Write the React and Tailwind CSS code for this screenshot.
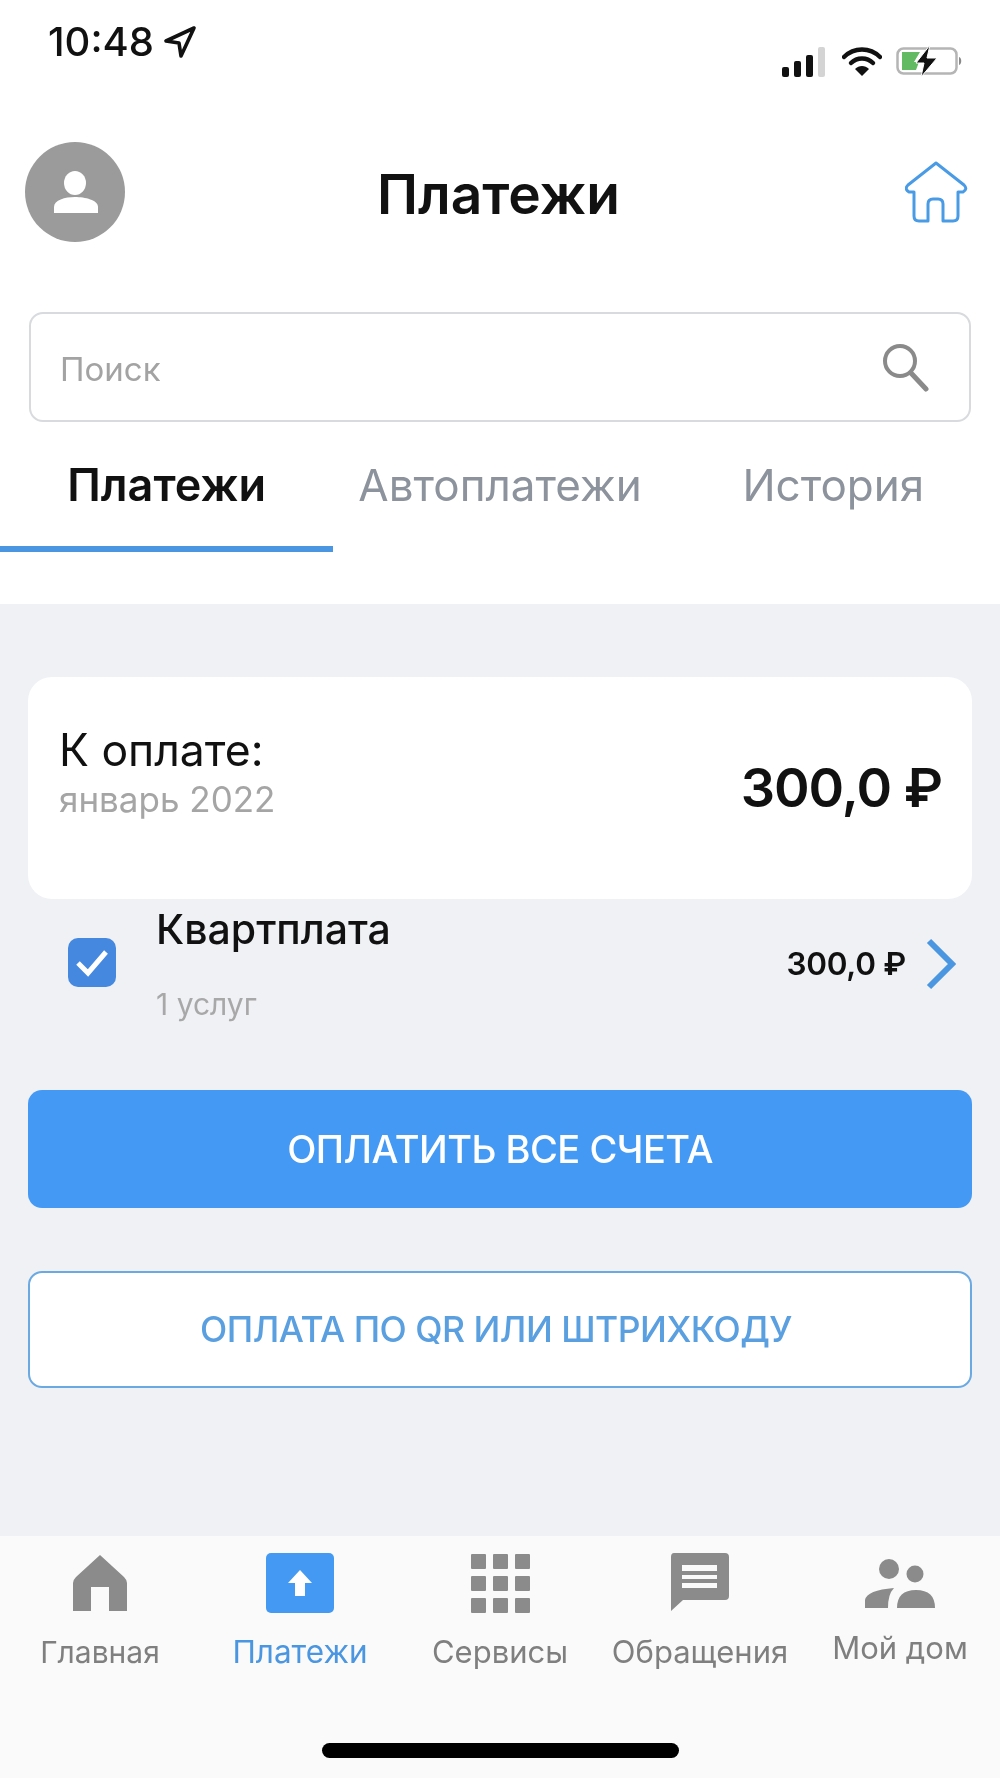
import React from 'react';

const navItems = [
  { label: 'Главная', icon: <HomeSolid />, size: 'text-[30px]' },
  { label: 'Платежи', icon: <PayIcon />, active: true, size: 'text-[31.5px]' },
  { label: 'Сервисы', icon: <GridIcon />, size: 'text-[31px]' },
  { label: 'Обращения', icon: <ChatIcon />, size: 'text-[31px]' },
  { label: 'Мой дом', icon: <PeopleIcon />, raised: true, size: 'text-[31px]' },
];

function LocationArrow() {
  return (
    <svg width="34" height="34" viewBox="0 0 34 34" fill="none">
      <path d="M31 3 L3 16 L16 18 L18 31 Z" stroke="#111" strokeWidth="3.6" strokeLinejoin="round" />
    </svg>
  );
}

function StatusIcons() {
  return (
    <div className="flex items-end gap-[14px]">
      <svg width="46" height="30" viewBox="0 0 46 30">
        <rect x="0" y="20" width="7" height="10" rx="2" fill="#111" />
        <rect x="12" y="14" width="7" height="16" rx="2" fill="#111" />
        <rect x="24" y="8" width="7" height="22" rx="2" fill="#111" />
        <rect x="36" y="0" width="7" height="30" rx="2" fill="#d4d4d4" />
      </svg>
      <svg width="40" height="30" viewBox="0 0 40 30" fill="none">
        <path d="M2 10 C12 0 28 0 38 10" stroke="#111" strokeWidth="4.5" strokeLinecap="round" />
        <path d="M9 16 C15 10 25 10 31 16" stroke="#111" strokeWidth="4.5" strokeLinecap="round" />
        <path d="M20 29 L13 22 C17 18 23 18 27 22 Z" fill="#111" />
      </svg>
      <svg width="68" height="32" viewBox="0 0 68 32" fill="none">
        <rect x="1.500" y="3.500" width="59" height="25" rx="6" stroke="#b5b5b5" strokeWidth="2.500" />
        <path d="M6 7 H24 L18 17 H23 L20 25 H6 Z" fill="#62bb62" />
        <path d="M63 12 C66 13 66 19 63 20 Z" fill="#8a8a8a" />
        <path d="M34 0 L20 18 H28 L25 32 L41 13 H31 Z" fill="#111" stroke="#fff" strokeWidth="1" />
      </svg>
    </div>
  );
}

function HomeOutline() {
  return (
    <svg width="63" height="63" viewBox="0 0 63 63" fill="none">
      <path
        d="M31 2 L3 24 Q-1 28 4 31 L9 31 V55 Q9 60 14 60 H23 V43 Q23 38 28 38 H33 Q38 38 38 43 V60 H48 Q53 60 53 55 V31 L58 31 Q63 28 59 24 Z"
        stroke="#4a9be6"
        strokeWidth="3"
        strokeLinejoin="round"
      />
    </svg>
  );
}

function SearchIcon() {
  return (
    <svg width="48" height="50" viewBox="0 0 48 50" fill="none">
      <circle cx="19" cy="19" r="15" stroke="#8a8a8a" strokeWidth="4" />
      <path d="M30 31 L45 47" stroke="#8a8a8a" strokeWidth="5" strokeLinecap="round" />
    </svg>
  );
}

function HomeSolid() {
  return (
    <svg width="56" height="56" viewBox="0 0 56 56">
      <path d="M28 0 L52 22 Q55 25 55 28 V56 H37 V32 H19 V56 H1 V28 Q1 25 4 22 Z" fill="#8b8b8b" />
    </svg>
  );
}

function PayIcon() {
  return (
    <div className="w-[68px] h-[60px] rounded-[5px] bg-[#4499f2] flex items-center justify-center">
      <svg width="26" height="28" viewBox="0 0 26 28">
        <path d="M13 1 L25 14 H18 V27 H8 V14 H1 Z" fill="#fff" />
      </svg>
    </div>
  );
}

function GridIcon() {
  const cells = [0, 1, 2, 3, 4, 5, 6, 7, 8];
  return (
    <div className="grid grid-cols-3 gap-[7px] w-[59px] h-[59px]">
      {cells.map((c) => (
        <div key={c} className="bg-[#8b8b8b] rounded-[1px]" />
      ))}
    </div>
  );
}

function ChatIcon() {
  return (
    <svg width="60" height="60" viewBox="0 0 60 60">
      <path d="M4 0 H55 Q59 0 59 4 V43 Q59 47 55 47 H13 L1 58 V4 Q1 0 4 0 Z" fill="#8b8b8b" />
      <rect x="12" y="12" width="35" height="6" fill="#fafafa" />
      <rect x="12" y="22" width="35" height="4" fill="#fafafa" />
      <rect x="12" y="30" width="35" height="5" fill="#fafafa" />
    </svg>
  );
}

function PeopleIcon() {
  return (
    <svg width="72" height="52" viewBox="0 0 72 52">
      <circle cx="25" cy="12" r="10" fill="#8b8b8b" />
      <circle cx="51" cy="17" r="8.500" fill="#8b8b8b" />
      <path d="M1 51 V43 Q3 33 30 31 Q24 37 24 51 Z" fill="#8b8b8b" />
      <path d="M33 51 Q33 33 52 33 Q71 33 71 51 Z" fill="#8b8b8b" />
    </svg>
  );
}

export default function App() {
  return (
    <div className="w-[1000px] h-[1778px] flex flex-col bg-white font-['Inter',sans-serif] text-[#111] blur-[0.5px]">
      {/* Status bar */}
      <div className="h-[142px] flex justify-between items-start pl-[48px] pr-[36px]">
        <div className="flex items-center gap-[9px] pt-[20px]">
          <span className="text-[40px] leading-[44px] font-medium">10:48</span>
          <LocationArrow />
        </div>
        <div className="pt-[45px]">
          <StatusIcons />
        </div>
      </div>

      {/* Header */}
      <div className="grid grid-cols-[1fr_auto_1fr] items-center h-[100px] pl-[25px] pr-[32px]">
        <div className="w-[100px] h-[100px] rounded-full bg-[#9b9b9b] flex items-center justify-center">
          <svg width="100" height="100" viewBox="0 0 100 100">
            <ellipse cx="50" cy="41" rx="11" ry="12" fill="#fff" />
            <path d="M29 71 V65 C29 58 40 55 50 55 C60 55 73 58 73 65 V71 Z" fill="#fff" />
          </svg>
        </div>
        <h1 className="text-[55px] leading-[60px] font-semibold text-center pt-[4px] pl-[4px]">Платежи</h1>
        <div className="justify-self-end">
          <HomeOutline />
        </div>
      </div>

      {/* Search */}
      <div className="mt-[70px] mx-[29px] h-[110px] border-2 border-[#d8dadd] rounded-[14px] flex items-center justify-between pl-[29px] pr-[40px]">
        <span className="text-[33px] text-[#a3a3a3] pt-[6px]">Поиск</span>
        <SearchIcon />
      </div>

      {/* Tabs */}
      <div className="grid grid-cols-3 text-[44px] h-[130px]">
        <div className="border-b-[6px] border-[#4a96e0] flex items-center justify-center pt-[2px] font-semibold text-[45px]">Платежи</div>
        <div className="flex items-center justify-center pt-[2px] pb-[6px] text-[#8c939c]">Автоплатежи</div>
        <div className="flex items-center justify-center pt-[2px] pb-[6px] text-[#8c939c]">История</div>
      </div>

      {/* Content */}
      <div className="mt-[52px] flex-1 bg-[#eff1f5] px-[28px] pt-[73px]">
        <div className="h-[222px] bg-white rounded-[24px] flex items-center justify-between pl-[31px] pr-[30px] pb-[8px]">
          <div className="pb-[20px]">
            <div className="text-[44.5px] leading-[50px]">К оплате:</div>
            <div className="text-[35px] leading-[48px] text-[#a5a5a5]">январь 2022</div>
          </div>
          <div className="text-[54px] font-semibold tracking-[-1px] pt-[6px]">300,0 ₽</div>
        </div>

        <div className="h-[191px] flex items-start pl-[40px] pr-[16px]">
          <div className="mt-[39px] w-[48px] h-[49px] rounded-[10px] bg-[#4488e0] flex items-center justify-center">
            <svg width="34" height="28" viewBox="0 0 34 28" fill="none">
              <path d="M3 14 L13 24 L31 3" stroke="#fff" strokeWidth="5" />
            </svg>
          </div>
          <div className="ml-[40px] pt-[5px]">
            <div className="text-[41px] leading-[50px] font-medium">Квартплата</div>
            <div className="mt-[32px] text-[30px] leading-[36px] text-[#a8a8a8]">1 услуг</div>
          </div>
          <div className="ml-auto mt-[39px] flex items-center gap-[20px]">
            <span className="text-[31.5px] font-semibold tracking-[-0.3px]">300,0 ₽</span>
            <svg width="30" height="52" viewBox="0 0 30 52" fill="none">
              <path d="M3 3 L26 26 L3 49" stroke="#4a96e0" strokeWidth="6" />
            </svg>
          </div>
        </div>

        <button className="w-full h-[118px] rounded-[14px] bg-[#4499f5] text-white text-[38px] font-medium tracking-[-0.5px]">
          ОПЛАТИТЬ ВСЕ СЧЕТА
        </button>
        <button className="mt-[63px] w-full h-[117px] rounded-[14px] bg-white border-2 border-[#6aa9e2] text-[#5a9fdf] text-[35.5px] font-medium tracking-[-0.5px] pr-[8px]">
          ОПЛАТА ПО QR ИЛИ ШТРИХКОДУ
        </button>
      </div>

      {/* Bottom nav */}
      <div className="h-[242px] bg-[#fafafa] flex flex-col">
        <div className="grid grid-cols-5 pt-[17px]">
          {navItems.map((item) => (
            <div key={item.label} className="flex flex-col items-center">
              <div className="h-[60px] flex items-center justify-center">{item.icon}</div>
              <span
                className={`${item.size} leading-[40px] whitespace-nowrap ${item.raised ? 'mt-[15px]' : 'mt-[19px]'} ${
                  item.active ? 'text-[#4a96e0]' : 'text-[#7f7f7f]'
                }`}
              >
                {item.label}
              </span>
            </div>
          ))}
        </div>
        <div className="mt-auto mb-[20px] mx-auto w-[357px] h-[15px] rounded-full bg-black" />
      </div>
    </div>
  );
}
